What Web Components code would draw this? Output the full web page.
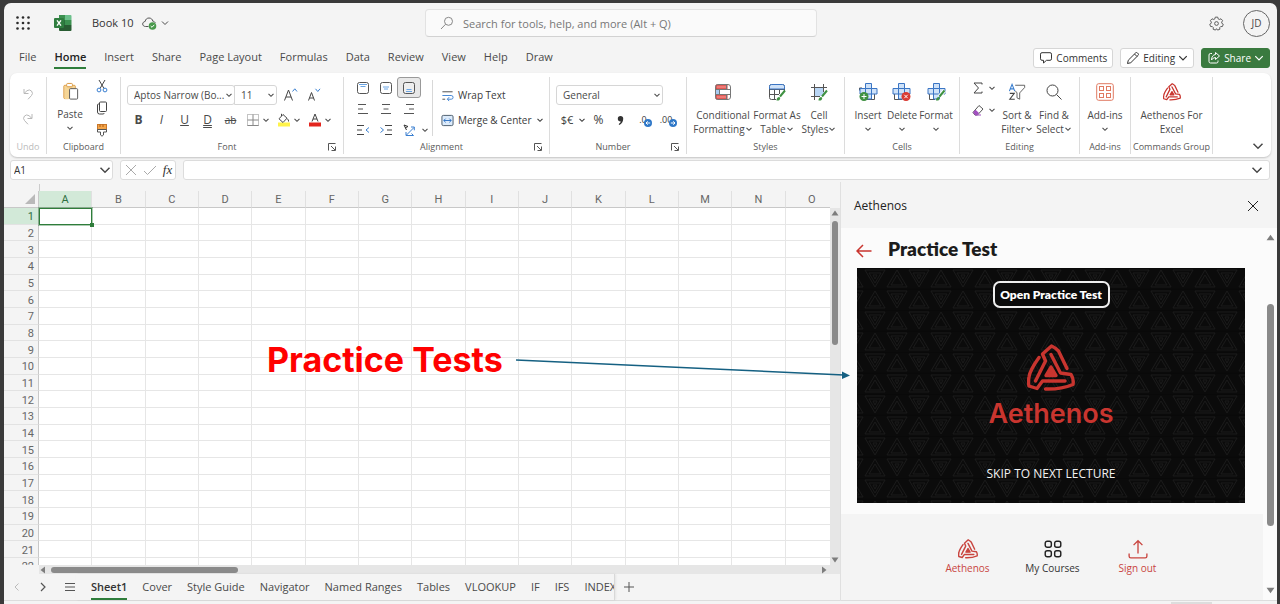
<!DOCTYPE html>
<html lang="en">
<head>
<meta charset="utf-8">
<title>Book 10</title>
<style>
html,body{margin:0;height:100%}
body{background:#3a3a3a;font-family:"Open Sans","Noto Sans",sans-serif;font-size:11px;line-height:14px;color:#4a4a4a;overflow:hidden}
</style>
</head>
<body>
<excel-app></excel-app>
<script>
const CONTROL = 'button,input,select{font:inherit;color:inherit;margin:0;padding:0;border:0;background:none;border-radius:0;outline:0;box-sizing:border-box}*{box-sizing:border-box}';

const LOGO = '<g fill="none" stroke="currentColor" stroke-width="3.4" stroke-linecap="round" stroke-linejoin="round"><path d="M40 24.500L31.500 7Q28 3.500 24.500 2L15.500 10 18.500 17 8.500 37"/><path d="M24 10.500L33.500 29 44 30.500Q47 35 46 40.500 34 45.500 18.500 45"/><path d="M12 13.500Q3 26 2 33 1 38 2 42L10 44.500 15.500 37H38"/><path d="M24 23l-5 8.500h10z" fill="currentColor"/></g>';
const ICONS = {
  logo:['0 0 48 48',LOGO],
  dots:['0 0 14 14','<g fill="#2b2b2b"><circle cx="1.5" cy="1.500" r="1.300"/><circle cx="7" cy="1.500" r="1.300"/><circle cx="12.500" cy="1.500" r="1.300"/><circle cx="1.500" cy="7" r="1.300"/><circle cx="7" cy="7" r="1.300"/><circle cx="12.500" cy="7" r="1.300"/><circle cx="1.500" cy="12.500" r="1.300"/><circle cx="7" cy="12.500" r="1.300"/><circle cx="12.500" cy="12.500" r="1.300"/></g>'],
  excel:['0 0 18 16','<path d="M5 0h6v5H5z" fill="#3c9150"/><path d="M11 0h5.500q1 0 1 1v4H11z" fill="#6cc08b"/><path d="M5 5h6v5H5z" fill="#2a6f3c"/><path d="M11 5h6.500v5H11z" fill="#3c9150"/><path d="M5 10h12.500v5q0 1-1 1H6q-1 0-1-1z" fill="#285c32"/><rect y="3" width="10" height="10" rx="1" fill="#2f7d3f"/><path d="M3 5.300l4 5.400M7 5.300l-4 5.400" stroke="#fff" stroke-width="1.400"/>'],
  cloud:['0 0 15 13','<path d="M6.500 9.500H3.600C1.700 9.500.7 8.300.7 7s1-2.400 2.400-2.500C3.600 2.200 5 1 7 1s3.500 1.300 3.800 3.200c1.300.1 2.100.8 2.500 1.800" fill="none" stroke="#555"/><circle cx="10.500" cy="9" r="3.800" fill="#4a9a4d"/><path d="M8.700 9l1.300 1.300 2.300-2.500" fill="none" stroke="#fff"/>'],
  chev:['0 0 8 8','<path d="M1 2.500l3 3 3-3" fill="none" stroke="currentColor" stroke-width="1"/>'],
  chevs:['0 0 8 8','<path d="M1.500 2.800l2.500 2.500 2.500-2.500" fill="none" stroke="currentColor" stroke-width="1.100"/>'],
  search:['0 0 14 14','<g fill="none" stroke="#888"><circle cx="8.500" cy="5.300" r="4"/><path d="M5.500 8.300L1 13"/></g>'],
  gear:['0 0 16 16','<g fill="none" stroke="#555"><path d="M6.700 1.200h2.600l.5 1.900 1.100.6 1.900-.7 1.700 1.900-1 1.700.2 1.200 1.500 1-.9 2.400-1.900.1-.9.9 0 2-2.400.8L8 13.500l-1.100 1.500-2.400-.8 0-2-.9-.9-1.900-.1-.9-2.400 1.500-1 .2-1.200-1-1.700L3.200 3l1.900.7 1.100-.6z" stroke-linejoin="round"/><circle cx="8" cy="8" r="2"/></g>'],
  comment:['0 0 14 14','<path d="M3 1.700h8q1.500 0 1.500 1.500v4.600q0 1.500-1.500 1.500H7.500L4.500 12V9.300H3Q1.500 9.300 1.500 7.800V3.200Q1.500 1.700 3 1.700z" fill="none" stroke="#333"/>'],
  pencil:['0 0 14 14','<g fill="none" stroke="#333" stroke-linejoin="round"><path d="M1.500 12.500l.8-3.300L9.500 2q1-1 2 0l.5.500q1 1 0 2L4.800 11.700z"/><path d="M8.500 3l2.500 2.500"/></g>'],
  share:['0 0 14 14','<g fill="none" stroke="#fff" stroke-linejoin="round"><path d="M5 2.500H3.500q-1.500 0-1.500 1.500v6.500Q2 12 3.500 12h6q1.500 0 1.500-1.500V9.500"/><path d="M8.500 1.500L12.500 5l-4 3.500V6.500Q6 6.500 4.500 9 4.700 4 8.500 3.500z"/></g>'],
  undo:['0 0 14 14','<g fill="none" stroke="#b8b8b8"><path d="M3 2v4.500h4.500"/><path d="M3 6.500L6 3.700Q8.500 2 10.500 4 12.500 6.500 10.500 8.500L7 12.300"/></g>'],
  redo:['0 0 14 14','<g fill="none" stroke="#b8b8b8"><path d="M11 2v4.500H6.500"/><path d="M11 6.500L8 3.700Q5.500 2 3.500 4 1.500 6.500 3.500 8.500L7 12.300"/></g>'],
  paste:['0 0 18 20','<path d="M7 17.500H3q-1 0-1-1v-12q0-1 1-1h10q1 0 1 1V7" fill="#f7d9a0" stroke="#d9963c"/><path d="M3 4h10v14H3z" fill="#f5d596"/><rect x="5" y="1.500" width="6" height="3.500" rx="1" fill="#fff" stroke="#d9963c"/><rect x="8" y="7" width="8.500" height="11" rx="1" fill="#fff" stroke="#555"/>'],
  cut:['0 0 14 14','<path d="M4 1l5 8.500M10 1L5 9.500" stroke="#444" fill="none"/><g fill="none" stroke="#3a7fd0"><circle cx="4" cy="11" r="1.900"/><circle cx="10" cy="11" r="1.900"/></g>'],
  copy:['0 0 14 14','<g fill="none" stroke="#444"><rect x="4.500" y="1" width="7" height="9.500" rx="1"/><path d="M4.500 3H3.500q-1 0-1 1v7q0 2 2 2H8q1 0 1.300-1"/></g>'],
  brush:['0 0 14 14','<rect x="2.500" y="1.500" width="9" height="5" fill="#f3a54a" stroke="#c9772a"/><path d="M5 1.500V4M8 1.500V4" stroke="#b35c10"/><path d="M2.500 6.500h9v2.500H8.500v3L7 13.200 5.500 12V9h-3z" fill="#fff" stroke="#555"/>'],
  grow:['0 0 16 16','<path d="M1.500 13.500L5.500 3l4 10.500M3 10h5" fill="none" stroke="#444"/><path d="M9.500 4.500l2.300-2.700L14 4.500" fill="none" stroke="#3a7fd0"/>'],
  shrink:['0 0 16 16','<path d="M2.500 13.500L5.500 5.500l3 8M3.500 11h4" fill="none" stroke="#444"/><path d="M9.500 1.800l2.300 2.700L14 1.800" fill="none" stroke="#3a7fd0"/>'],
  borders:['0 0 14 14','<g fill="none" stroke="#888"><rect x="1.500" y="1.500" width="11" height="11" stroke-dasharray="1 1"/><path d="M7 1.500v11M1.500 7h11M1.500 12.500h11"/></g>'],
  fill:['0 0 14 14','<rect x="1" y="9.500" width="12" height="4" fill="#fff34a"/><path d="M6 1.500L2 5.800l4 3.700 4-4.300zM4.500 3V.8M10 5.500q2 1.500 1.500 3" fill="#fff" stroke="#444"/>'],
  fcolor:['0 0 14 14','<rect x="1" y="9.500" width="12" height="4" fill="#e3261f"/><path d="M4 8.500L7 1l3 7.500M5 6h4" fill="none" stroke="#444"/>'],
  launch:['0 0 10 10','<path d="M1.500 8.500v-7h7M4 4l4 4M8.500 4.500v4h-4" fill="none" stroke="#555"/>'],
  vtop:['0 0 14 14','<rect x="1.500" y="1.500" width="11" height="11" rx="2" fill="#fff" stroke="#555"/><path d="M3 3.500h8M4.500 5.500h5" stroke="#6aa5e4"/>'],
  vmid:['0 0 14 14','<rect x="1.500" y="1.500" width="11" height="11" rx="2" fill="#fff" stroke="#555"/><path d="M4 6h6M5 8h4" stroke="#6aa5e4"/>'],
  vbot:['0 0 14 14','<rect x="1.500" y="1.500" width="11" height="11" rx="2" fill="#eee" stroke="#555"/><path d="M4.500 8.500h5M4 10.500h6" stroke="#6aa5e4"/>'],
  left:['0 0 14 14','<path d="M2 2.500h8M2 7h5M2 11.500h10" stroke="#555"/>'],
  center:['0 0 14 14','<path d="M3 2.500h8M4.500 7h5M2 11.500h10" stroke="#555"/>'],
  right:['0 0 14 14','<path d="M4 2.500h8M7 7h5M2 11.500h10" stroke="#555"/>'],
  outdent:['0 0 14 14','<path d="M1 2.500h7M1 7h5M1 11.500h7" stroke="#444"/><path d="M13 4.500L10 7l3 2.500" fill="none" stroke="#3a7fd0"/>'],
  indent:['0 0 14 14','<path d="M6 2.500h7M8 7h5M6 11.500h7" stroke="#444"/><path d="M1.500 4.500l3 2.500-3 2.500" fill="none" stroke="#3a7fd0"/>'],
  orient:['0 0 14 14','<path d="M2 2l4 1.500M2 2l2.500 5M3 5l3-1.500" fill="none" stroke="#333"/><path d="M4.500 12L12 4.500M9 4h3.300v3.300M4 9v3.500h7.500l-2-2" fill="none" stroke="#3a7fd0"/>'],
  wrap:['0 0 14 14','<path d="M1.500 3h11M1.500 11h3" stroke="#444"/><path d="M1.500 7H11q2 0 2 2t-2 2H7M8.800 8.800L6.800 11l2 2" fill="none" stroke="#3a7fd0"/>'],
  merge:['0 0 14 14','<rect x="1" y="1.500" width="12" height="11" rx="1.500" fill="#dcebfb" stroke="#456"/><path d="M3 7h8M5 5L3 7l2 2M9 5l2 2-2 2" fill="none" stroke="#2a6fc4"/>'],
  comma:['0 0 8 10','<path d="M4 0a3 3 0 0 1 3 3.200Q7 7.500 2.500 10L2 9Q4.300 7.500 4.300 6 1 6 1 3A3 3 0 0 1 4 0z" fill="#333"/>'],
  circR:['0 0 8 8','<circle cx="4" cy="4" r="4" fill="#2f78c8"/><path d="M1.800 4h4M4.300 2.300L6 4 4.300 5.700" fill="none" stroke="#fff"/>'],
  circL:['0 0 8 8','<circle cx="4" cy="4" r="4" fill="#2f78c8"/><path d="M6.200 4h-4M3.700 2.300L2 4l1.700 1.700" fill="none" stroke="#fff"/>'],
  cond:['0 0 18 18','<rect x="1.500" y="1.500" width="15" height="15" rx="2" fill="#fff"/><path d="M2 2h11v4H2zM2 12h11v4H2z" fill="#ef7a76" stroke="#cf3b38"/><path d="M2 6.500h3v5H2z" fill="#a9cbf2"/><rect x="1.500" y="1.500" width="15" height="15" rx="2.500" fill="none" stroke="#777"/><path d="M1.500 6.500h15M1.500 11.500h15M5.500 6.500v5M12.500 1.500v5M12.500 11.500v5" stroke="#777" fill="none"/>'],
  table:['0 0 18 18','<path d="M16.500 9V3.500q0-2-2-2h-11q-2 0-2 2v11q0 2 2 2H8M1.500 6.500h15M1.500 11.500H11M6.500 6.500v10M11.500 6.500V11" fill="#fff" stroke="#555"/><path d="M1.500 6V3.500q0-2 2-2h11q2 0 2 2V6z" fill="#cfe2f8" stroke="#3a75c4"/><path d="M17 7.500L12 13.500" stroke="#3f9142" stroke-width="2"/><path d="M8.500 17.500q0-3.500 3-3.500 1.500 1.500 0 3-1 .8-3 .5z" fill="#3f9142"/>'],
  cell:['0 0 18 18','<path d="M5 5h9v8H5z" fill="#b9d6f5"/><path d="M4.500 1v16M13.500 1v8M1 4.500h16M1 13.500h9" stroke="#555" fill="none"/><path d="M17 7.500L12 13.500" stroke="#3f9142" stroke-width="2"/><path d="M8.500 17.500q0-3.500 3-3.500 1.500 1.500 0 3-1 .8-3 .5z" fill="#3f9142"/>'],
  insert:['0 0 20 20','<path d="M16.500 12v5.500H9M1.500 8.500V6H4" stroke="#555" fill="none"/><path d="M7.500 1.500h6v5H19v5.500h-5.500v5h-6v-5H2V6.500h5.500z" fill="#cfe2f8" stroke="#3a75c4"/><path d="M7.500 6.500h6V12h-6z" fill="none" stroke="#3a75c4"/><circle cx="6" cy="14.500" r="4.500" fill="#3f9142"/><path d="M3.500 14.500h5M6 12v5" stroke="#fff"/>'],
  delete:['0 0 20 20','<path d="M2.500 12v5.500H10" stroke="#555" fill="none"/><path d="M6.500 1.500h6v5H18v5.500h-5.500v5h-6v-5H1V6.500h5.500z" fill="#cfe2f8" stroke="#3a75c4"/><path d="M6.500 6.500h6V12h-6z" fill="none" stroke="#3a75c4"/><circle cx="14" cy="14.500" r="4.500" fill="#d93a33"/><path d="M12.300 12.800l3.400 3.400M15.700 12.800l-3.400 3.400" stroke="#fff"/>'],
  format:['0 0 20 20','<path d="M3.500 12v5.500H9" stroke="#555" fill="none"/><path d="M7.500 1.500h6v5H19v5.500h-5.500v5h-6v-5H2V6.500h5.500z" fill="#cfe2f8" stroke="#3a75c4"/><path d="M7.500 6.500h6V12h-6z" fill="none" stroke="#3a75c4"/><path d="M18.500 8.500L13.500 14.500" stroke="#fff" stroke-width="4"/><path d="M18.500 8.500L13.500 14.500" stroke="#3f9142" stroke-width="2"/><path d="M10 18.500q0-3.500 3-3.500 1.500 1.500 0 3-1 .8-3 .5z" fill="#3f9142"/>'],
  sum:['0 0 12 12','<path d="M10 2.500V1H2l4.500 5L2 11h8V9.500" fill="none" stroke="#444"/>'],
  eraser:['0 0 12 12','<path d="M7 1.500l4 3.500-5.500 6H3L1 8.500z" fill="#fff" stroke="#555"/><path d="M1 8.300l2.500-2.500L7 9l-2 2H3z" fill="#a24fc0"/><path d="M3 11h6" stroke="#a24fc0"/>'],
  sort:['0 0 20 20','<path d="M8 2.500h10.500v2.500L13 11v7l-3-1.500V11L8 8.500" fill="#fff" stroke="#555"/><path d="M1.500 9L4.500 1.500 7.500 9M2.700 6.500h3.600" fill="none" stroke="#3a7fd0" stroke-width="1.200"/><path d="M2 11.500h5L2 18h5.500" fill="none" stroke="#444" stroke-width="1.200"/>'],
  find:['0 0 18 18','<circle cx="7.500" cy="7.500" r="5.500" fill="none" stroke="#444"/><path d="M11.500 11.500l5 5" stroke="#444"/>'],
  addins:['0 0 18 18','<g fill="none" stroke="#e07a62"><rect x=".7" y=".7" width="16.600" height="16.600" rx="2"/><rect x="3.500" y="3.500" width="4" height="4"/><rect x="10.500" y="3.500" width="4" height="4"/><rect x="3.500" y="10.500" width="4" height="4"/><rect x="10.500" y="10.500" width="4" height="4"/></g>'],
  x:['0 0 14 14','<path d="M2 2l10 10M12 2L2 12" stroke="currentColor" fill="none"/>'],
  check:['0 0 14 14','<path d="M1 8l3.500 3.500L13 3" stroke="currentColor" fill="none"/>'],
  prev:['0 0 10 10','<path d="M6.500 1.500L3 5l3.500 3.500" stroke="#bbb" fill="none"/>'],
  next:['0 0 10 10','<path d="M3 1l4 4-4 4" stroke="#555" fill="none" stroke-width="1.200"/>'],
  menu:['0 0 12 12','<path d="M1 2.500h10M1 6h10M1 9.500h10" stroke="#555"/>'],
  plus:['0 0 12 12','<path d="M6 1v10M1 6h10" stroke="#555"/>'],
  up:['0 0 8 8','<path d="M4 1.500L7.500 6.500H.5z" fill="#7d7d7d"/>'],
  down:['0 0 8 8','<path d="M4 6.500L7.500 1.500H.5z" fill="#7d7d7d"/>'],
  lft:['0 0 8 8','<path d="M1.500 4L6 .5v7z" fill="#7d7d7d"/>'],
  rgt:['0 0 8 8','<path d="M6.500 4L2 .5v7z" fill="#7d7d7d"/>'],
  corner:['0 0 10 10','<path d="M10 0v10H0z" fill="#b9b9b9"/>'],
  back:['0 0 16 14','<path d="M1 7h14.500M7 1L1 7l6 6" stroke="#c9352f" stroke-width="1.500" fill="none"/>'],
  apps:['0 0 18 18','<g fill="none" stroke="#222" stroke-width="1.300"><rect x="2" y="2" width="5.500" height="5.500" rx="1.800"/><rect x="10.500" y="2" width="5.500" height="5.500" rx="1.800"/><rect x="2" y="10.500" width="5.500" height="5.500" rx="1.800"/><rect x="10.500" y="10.500" width="5.500" height="5.500" rx="1.800"/></g>'],
  signout:['0 0 18 18','<path d="M9 13V1.500M5 5.500l4-4 4 4M1 13v2.500q0 1.500 1.500 1.500h13q1.500 0 1.500-1.500V13" fill="none" stroke="#c9453f" stroke-width="1.200"/>']
};

const define = (name, html, init) => {
  const t = document.createElement('template');
  t.innerHTML = `<style>${CONTROL}</style>` + html;
  customElements.define(name, class extends HTMLElement {
    connectedCallback(){
      if (this.shadowRoot) return;
      const root = this.attachShadow({mode:'open'});
      root.append(t.content.cloneNode(true));
      if (init) init(root, this);
    }
  });
};

/* <ui-icon name size [h]> */
define('ui-icon', '<style>:host{display:block;flex:none}svg{display:block}</style>', (root, host) => {
  const [box, body] = ICONS[host.getAttribute('name')];
  const w = host.getAttribute('size') || 14, h = host.getAttribute('h') || w;
  const s = document.createElement('div');
  s.innerHTML = `<svg width="${w}" height="${h}" viewBox="${box}" aria-hidden="true">${body}</svg>`;
  root.append(s);
});

/* icon-only button */
define('icon-button', `<style>:host{display:flex;justify-content:center;align-items:center;flex:none}button{display:flex;align-items:center;justify-content:center;width:100%;height:100%}
:host([pressed]) button{background:#e8e8e8;border:1px solid #999;border-radius:3px}</style><button type="button"></button>`, (root, host) => {
  const b = root.querySelector('button');
  b.setAttribute('aria-label', host.getAttribute('label') || host.getAttribute('icon'));
  b.innerHTML = `<ui-icon name="${host.getAttribute('icon')}" size="${host.getAttribute('size')||14}"></ui-icon>`;
});

/* tall ribbon button: icon over one or two lines */
define('big-button', `<style>:host{display:block;flex:none;min-width:0}
button{display:flex;flex-direction:column;align-items:center;width:100%;font-size:10px;line-height:13px;white-space:nowrap}
.i{height:20px;display:flex;align-items:center;margin-bottom:7px;color:#c9352f}
.r{display:flex;align-items:center;height:14px}</style>
<button type="button"><span class="i"></span><span class="a"></span><span class="r"></span></button>`, (root, host) => {
  root.querySelector('.i').innerHTML = `<ui-icon name="${host.getAttribute('icon')}" size="${host.getAttribute('size')||18}"></ui-icon>`;
  root.querySelector('.a').textContent = host.getAttribute('top');
  root.querySelector('.r').innerHTML = `<span>${host.getAttribute('bottom')||''}</span>` + (host.hasAttribute('nochev') ? '' : '<ui-icon name="chevs" size="8"></ui-icon>');
});

define('ribbon-group', `<style>:host{display:flex;flex-direction:column;flex:none;border-right:1px solid #dcdcdc;height:77px}
.body{flex:1;min-height:0;display:flex}
footer{height:14px;line-height:14px;font-size:9px;text-align:center;color:#5a5a5a;display:grid;grid-template-columns:1fr auto 1fr;align-items:center;white-space:nowrap}
:host([launcher]) footer{padding-right:10px}
ui-icon{justify-self:end;margin-right:-4px}
:host([muted]) footer{color:#bbb}</style><div class="body"><slot></slot></div><footer><i></i><span></span></footer>`, (root, host) => {
  root.querySelector('span').textContent = host.getAttribute('label');
  if (host.hasAttribute('launcher')) root.querySelector('footer').insertAdjacentHTML('beforeend','<ui-icon name="launch" size="10"></ui-icon>');
});

define('drop-list', `<style>:host{display:grid;height:20px;border:1px solid #d6d6d6;border-radius:3px;background:#fff;font-size:10px}
select,ui-icon{grid-area:1/1}select{appearance:none;width:100%;min-width:0;padding:0 8px 0 6px}ui-icon{justify-self:end;align-self:center;margin-right:1px;pointer-events:none}</style>
<select><option></option></select><ui-icon name="chevs" size="8"></ui-icon>`, (root, host) => {
  root.querySelector('option').textContent = host.getAttribute('value');
  root.querySelector('select').setAttribute('aria-label', host.getAttribute('label'));
});

define('title-bar', `<style>:host{display:grid;grid-template-columns:421px minmax(0,392px) 1fr;height:40px;align-items:center}
.l{display:flex;align-items:center;padding-left:12px}.l h1{font:inherit;margin:0 8px 0 20px;color:#333}
.l ui-icon+ui-icon{margin-left:24px}.l h1~ui-icon{margin-left:0}.l h1~ui-icon+ui-icon{margin-left:4px}
label{display:flex;align-items:center;height:28px;border:1px solid #e2e2e2;border-bottom-color:#d2d2d2;border-radius:4px;background:#fafafa;padding-left:14px;gap:9px}
input{flex:1;min-width:0;height:24px}input::placeholder{color:#777;opacity:1}
.r{display:flex;justify-content:flex-end;align-items:center;gap:19px;padding-right:7px}
.av{width:27px;height:27px;border:1px solid #666;border-radius:50%;font-size:10px}</style>
<div class="l"><ui-icon name="dots" size="14"></ui-icon><ui-icon name="excel" size="18" h="16"></ui-icon><h1>Book 10</h1><ui-icon name="cloud" size="15" h="13"></ui-icon><ui-icon name="chev" size="8"></ui-icon></div>
<label><ui-icon name="search" size="14"></ui-icon><input type="search" aria-label="Search" placeholder="Search for tools, help, and more (Alt + Q)"></label>
<div class="r"><ui-icon name="gear" size="15"></ui-icon><button class="av" type="button">JD</button></div>`);

define('menu-tabs', `<style>:host{display:flex;height:29px;align-items:center;padding:0 7px 0 15px}
nav{display:flex;gap:18px;flex:1;white-space:nowrap}a{color:#4a4a4a;text-decoration:none;height:23px;line-height:22px;border-bottom:2px solid transparent}
a.on{font-weight:600;color:#222;border-color:#2f7d3b}
.b{display:flex;gap:7px}button{display:flex;align-items:center;gap:3px;height:20px;border:1px solid #d6d6d6;border-radius:3px;background:#fff;padding:0 5px;font-size:10px;color:#333}
.s{background:#3a7a3f;border-color:#3a7a3f;color:#fff}</style>
<nav><a href="#file">File</a><a href="#home" class="on">Home</a><a href="#insert">Insert</a><a href="#share">Share</a><a href="#layout">Page Layout</a><a href="#formulas">Formulas</a><a href="#data">Data</a><a href="#review">Review</a><a href="#view">View</a><a href="#help">Help</a><a href="#draw">Draw</a></nav>
<div class="b"><button type="button"><ui-icon name="comment" size="14"></ui-icon>Comments</button><button type="button"><ui-icon name="pencil" size="14"></ui-icon>Editing<ui-icon name="chev" size="10"></ui-icon></button><button type="button" class="s"><ui-icon name="share" size="14"></ui-icon>Share<ui-icon name="chev" size="10"></ui-icon></button></div>`);

define('ribbon-bar', `<style>:host{display:flex;height:84px;margin:1px 6px 0;padding:4px 0 3px;background:#fff;border-radius:7px;box-shadow:0 1px 2px #0003;font-size:10px;overflow:hidden}
.col{display:flex;flex-direction:column}.row{display:flex;align-items:center}
.undo{width:37px}.clip{width:74px}.font{width:223px}.ali{width:206px}.num{width:137px}.sty{width:158px}.cel{width:115px}.edi{width:120px}.add{width:51px}.cmd{width:82px}
.undo .col{padding:10px 0 0 11px;gap:11px}
.clip big-button{width:46px;padding-top:4px}.clip .col{padding:2px 0 0 2px;gap:8px}
.font .col{padding:8px 0 0 6px}.top drop-list+drop-list{margin-left:-1px;border-radius:0 3px 3px 0}.fn{width:108px}.fs{width:43px}
.top icon-button{width:23px}.top icon-button:first-of-type{margin-left:2px}
.fmt{margin-top:7px;height:16px}.fmt button{width:23px;font-size:12px}.fmt .d{text-decoration:underline double}.fmt s{font-size:10px}
.fmt icon-button{width:18px}.chev{margin-right:5px}
.fmt button+icon-button{margin-left:2px}
.ag{display:grid;grid-template-columns:repeat(3,23px) 9px;grid-template-rows:21px 21px 21px;padding:0 0 0 7px;align-items:center;justify-items:center}
.ag icon-button[pressed]{width:24px;height:21px}
.sep{width:1px;background:#d8d8d8;height:56px;margin:3px 8px 0 3px}
.text{padding-top:11px;gap:11px;color:#3a3a3a}.text button{display:flex;align-items:center;gap:4px;height:14px;white-space:nowrap}
.num .col{padding:8px 0 0 6px}.num drop-list{width:107px}.nf{margin-top:7px;height:16px;color:#3a3a3a}.nf button{font-size:12px}
.cur{width:22px}.nf .cur{font-size:11px}.pct{margin-left:4px;width:17px}.com{width:27px}.dec{display:flex;width:23px;align-items:flex-end;justify-content:center}
.nf .dec{font-size:9px}.dec ui-icon{margin-left:-3px}
big-button{padding-top:5px}
.w72{width:72px}.w36{width:36px}.w48{width:48px}.w46{width:46px}.w22{width:22px}.w42{width:42px}.w32{width:32px}.w50{width:50px}.w81{width:81px}
.edi .col{padding:5px 0 0 12px;gap:10px;width:36px}.edi .row{justify-content:space-between}
.end{flex:1;display:flex;align-items:flex-end;justify-content:flex-end;padding:0 7px 2px}</style>
<ribbon-group class="undo" label="Undo" muted><div class="col"><icon-button icon="undo"></icon-button><icon-button icon="redo"></icon-button></div></ribbon-group>
<ribbon-group class="clip" label="Clipboard"><big-button icon="paste" size="19" top="Paste"></big-button><div class="col"><icon-button icon="cut" label="Cut"></icon-button><icon-button icon="copy" label="Copy"></icon-button><icon-button icon="brush" label="Format Painter"></icon-button></div></ribbon-group>
<ribbon-group class="font" label="Font" launcher><div class="col"><div class="row top"><drop-list class="fn" value="Aptos Narrow (Bo..." label="Font"></drop-list><drop-list class="fs" value="11" label="Font size"></drop-list><icon-button icon="grow" size="16"></icon-button><icon-button icon="shrink" size="16"></icon-button></div>
<div class="row fmt"><button type="button"><b>B</b></button><button type="button"><i>I</i></button><button type="button"><u>U</u></button><button type="button"><u class="d">D</u></button><button type="button"><s>ab</s></button><icon-button icon="borders"></icon-button><ui-icon class="chev" name="chevs" size="8"></ui-icon><icon-button icon="fill"></icon-button><ui-icon class="chev" name="chevs" size="8"></ui-icon><icon-button icon="fcolor"></icon-button><ui-icon name="chevs" size="8"></ui-icon></div></div></ribbon-group>
<ribbon-group class="ali" label="Alignment" launcher><div class="ag"><icon-button icon="vtop"></icon-button><icon-button icon="vmid"></icon-button><icon-button icon="vbot" pressed></icon-button><i></i><icon-button icon="left"></icon-button><icon-button icon="center"></icon-button><icon-button icon="right"></icon-button><i></i><icon-button icon="outdent"></icon-button><icon-button icon="indent"></icon-button><icon-button icon="orient"></icon-button><ui-icon name="chevs" size="8"></ui-icon></div><div class="sep"></div>
<div class="col text"><button type="button"><ui-icon name="wrap" size="13"></ui-icon>Wrap Text</button><button type="button"><ui-icon name="merge" size="13"></ui-icon>Merge &amp; Center<ui-icon name="chevs" size="8"></ui-icon></button></div></ribbon-group>
<ribbon-group class="num" label="Number" launcher><div class="col"><drop-list value="General" label="Number format"></drop-list><div class="row nf"><button type="button" class="cur">$€</button><ui-icon name="chevs" size="8"></ui-icon><button type="button" class="pct">%</button><icon-button class="com" icon="comma" size="9"></icon-button><button type="button" class="dec">.0<ui-icon name="circL" size="8"></ui-icon></button><button type="button" class="dec">.00<ui-icon name="circR" size="8"></ui-icon></button></div></div></ribbon-group>
<ribbon-group class="sty" label="Styles"><big-button class="w72" icon="cond" top="Conditional" bottom="Formatting"></big-button><big-button class="w36" icon="table" top="Format As" bottom="Table"></big-button><big-button class="w48" icon="cell" top="Cell" bottom="Styles"></big-button></ribbon-group>
<ribbon-group class="cel" label="Cells"><big-button class="w46" icon="insert" size="20" top="Insert"></big-button><big-button class="w22" icon="delete" size="20" top="Delete"></big-button><big-button class="w46" icon="format" size="20" top="Format"></big-button></ribbon-group>
<ribbon-group class="edi" label="Editing"><div class="col"><div class="row"><ui-icon name="sum" size="12"></ui-icon><ui-icon name="chevs" size="8"></ui-icon></div><div class="row"><ui-icon name="eraser" size="12"></ui-icon><ui-icon name="chevs" size="8"></ui-icon></div></div><big-button class="w42" icon="sort" top="Sort &amp;" bottom="Filter"></big-button><big-button class="w32" icon="find" top="Find &amp;" bottom="Select"></big-button></ribbon-group>
<ribbon-group class="add" label="Add-ins"><big-button class="w50" icon="addins" top="Add-ins"></big-button></ribbon-group>
<ribbon-group class="cmd" label="Commands Group"><big-button class="w81" icon="logo" top="Aethenos For" bottom="Excel" nochev></big-button></ribbon-group>
<div class="end"><ui-icon name="chev" size="12"></ui-icon></div>`);

define('formula-bar', `<style>:host{display:flex;gap:7px;margin:3px 7px 0 6px;height:20px}
div{border:1px solid #dcdcdc;border-radius:3px;background:#fff;display:flex;align-items:center}
.n{width:103px;padding:0 1px 0 3px}.n input{flex:1;min-width:0;font-size:10px;color:#333}
.f{width:56px;justify-content:space-around;color:#aaa}.f button{color:#333;font:italic 13px "Liberation Serif",serif}
.v{flex:1;padding:0 6px}.v input{flex:1}</style>
<div class="n"><input aria-label="Name box" value="A1"><ui-icon name="chev" size="12"></ui-icon></div>
<div class="f"><ui-icon name="x" size="14"></ui-icon><ui-icon name="check" size="14"></ui-icon><button type="button">fx</button></div>
<div class="v"><input aria-label="Formula"><ui-icon name="chev" size="12"></ui-icon></div>`);

define('sheet-grid', `<style>:host{display:grid;grid-template-columns:1fr 10px;grid-template-rows:9px 1fr 9px;flex:1;min-height:0;overflow:hidden;font-family:Roboto,sans-serif;font-size:11px;line-height:13px;color:#666}
.pad{grid-area:1/1/2/3;display:flex}.pad:before{content:"";width:35px;margin-top:2px;border-right:1px solid #ccc}
.view{grid-area:2/1;overflow:hidden;min-width:0;min-height:0}
table{display:grid;width:835px;height:417px;grid-template-columns:35px repeat(15,1fr);grid-template-rows:17px repeat(24,minmax(0,1fr))}
tbody,thead,tr{display:contents}
th{font-weight:400;padding:1px 0 0;display:flex;align-items:center;justify-content:center;background:#f4f4f4;border-right:1px solid #e0e0e0;border-bottom:1px solid #c8c8c8}
tbody th{justify-content:flex-end;padding:2px 4px 0 0;border-right-color:#c8c8c8;border-bottom-color:#e2e2e2}
thead td{display:flex;justify-content:flex-end;align-items:center;background:#f4f4f4;border-bottom:1px solid #c8c8c8;border-right:1px solid #c8c8c8;padding:0 3px 0 0}
tbody td{background:#fff;border-right:1px solid #e6e6e6;border-bottom:1px solid #e6e6e6;padding:0}
th.on{background:#d2e9d8;color:#2f6f3f}
td.sel{outline:1px solid #2f7d3b;outline-offset:-1px;box-shadow:0 0 0 1px #2f7d3b66;position:relative}
td.sel:after{content:"";position:absolute;right:-3px;bottom:-3px;width:4px;height:4px;background:#2f7d3b}
.v{grid-area:2/2;margin-top:17px;background:#e6e6e6;display:flex;flex-direction:column;align-items:center;padding:1px 1px 1px 0;gap:4px}
.v i{width:6px;height:124px;border-radius:3px;background:#8a8a8a}.v ui-icon:last-child{margin-top:auto}
.h{grid-area:3/1/4/3;margin-left:35px;background:#e6e6e6;display:flex;align-items:center;padding:0 12px 0 0;gap:4px}
.h i{height:6px;width:187px;border-radius:3px;background:#8a8a8a}.h ui-icon:last-child{margin-left:auto}</style>
<div class="pad"></div><div class="view"><table><thead><tr><td><ui-icon name="corner" size="10"></ui-icon></td></tr></thead><tbody></tbody></table></div>
<div class="v"><ui-icon name="up" size="8"></ui-icon><i></i><ui-icon name="down" size="8"></ui-icon></div>
<div class="h"><ui-icon name="lft" size="8"></ui-icon><i></i><ui-icon name="rgt" size="8"></ui-icon></div>`, root => {
  const cols = [...'ABCDEFGHIJKLMNO'];
  root.querySelector('thead tr').insertAdjacentHTML('beforeend', cols.map((c,i)=>`<th scope="col"${i?'':' class="on"'}>${c}</th>`).join(''));
  root.querySelector('tbody').innerHTML = Array.from({length:22},(_,r)=>`<tr><th scope="row"${r?'':' class="on"'}>${r+1}</th>${cols.map((c,i)=>`<td${r||i?'':' class="sel"'}></td>`).join('')}</tr>`).join('');
});

define('sheet-tabs', `<style>:host{display:flex;align-items:center;height:27px;padding-left:8px;border-bottom:1px solid #ddd;color:#4a4a4a}
.c{display:flex;gap:16px;align-items:center}
nav{display:flex;gap:15px;padding-left:15px;width:539px;overflow:hidden;border-right:1px solid #d8d8d8;box-shadow:1px 0 2px #0001;height:26px;white-space:nowrap}
a{color:inherit;text-decoration:none;line-height:25px;height:26px;border-bottom:2px solid transparent;flex:none}
a.on{font-weight:600;color:#333;border-color:#2f7d3b}.p{margin-left:8px}</style>
<div class="c"><ui-icon name="prev" size="10"></ui-icon><ui-icon name="next" size="10"></ui-icon><ui-icon name="menu" size="12"></ui-icon></div>
<nav><a href="#1" class="on">Sheet1</a><a href="#2">Cover</a><a href="#3">Style Guide</a><a href="#4">Navigator</a><a href="#5">Named Ranges</a><a href="#6">Tables</a><a href="#7">VLOOKUP</a><a href="#8">IF</a><a href="#9">IFS</a><a href="#10">INDEX</a></nav><ui-icon class="p" name="plus" size="12"></ui-icon>`);

define('lecture-card', `<style>:host{display:grid;height:235px;background:#0b0b0b}
svg.bg,.in{grid-area:1/1}svg.bg{width:100%;height:100%;display:block}
.in{display:flex;flex-direction:column;align-items:center;padding-top:13px;position:relative}
.open{height:27px;width:117px;border:2px solid #eee;border-radius:7px;background:#0b0b0b;color:#fff;font:800 12px Lato,sans-serif}
.lg{color:#c9352f;margin-top:36px}
strong{color:#c9352f;font:600 27px/32px Inter,sans-serif;margin-top:6px}
a{color:#f2f2f2;text-decoration:none;font-size:12px;margin-top:37px}</style>
<svg class="bg" aria-hidden="true"><defs><pattern id="p" width="44" height="42" patternUnits="userSpaceOnUse"><g fill="none" stroke="#1a1a1a"><g><path d="M8 2h20L18 19zM12 5h12l-6 10zM16 7h4l-2 4z"/><path d="M30 19L40 2l10 17zM34 17l6-10 6 10zM-14 19L-4 2 6 19zM-10 17l6-10 6 10z"/></g><path d="M-14 23h20L-4 40zM-10 26h12l-6 10zM30 23h20L40 40zM34 26h12l-6 10zM38 28h4l-2 4z"/><path d="M8 40l10-17 10 17zM12 38l6-10 6 10z"/></g><path d="M0 0h44M0 21h44" stroke="#070707"/></pattern></defs><rect width="100%" height="100%" fill="url(#p)"/></svg>
<div class="in"><button class="open" type="button">Open Practice Test</button><ui-icon class="lg" name="logo" size="48"></ui-icon><strong>Aethenos</strong><a href="#next">SKIP TO NEXT LECTURE</a></div>`);

define('task-pane', `<style>:host{display:flex;flex-direction:column;width:437px;flex:none;border-left:1px solid #e0e0e0}
header{height:46px;display:flex;align-items:center;justify-content:space-between;padding:2px 17px 0 13px;font-size:12px;color:#222}
.m{flex:1;display:flex;min-height:0;background:#fbfbfb;border-bottom:1px solid #ddd}
.c{flex:1;display:flex;flex-direction:column}
.t{display:flex;align-items:center;gap:16px;padding:5px 0 0 15px;height:40px}h2{margin:0;padding-bottom:3px;font:800 19px/30px Lato,sans-serif;color:#1c1c1c}
lecture-card{margin:0 18px 11px 16px}
footer{flex:1;background:#f4f4f4;display:flex;justify-content:center;padding:25px 0 0 1px;font-size:10px}
footer a{width:85px;display:flex;flex-direction:column;align-items:center;gap:2px;color:#c9453f;text-decoration:none}footer a.k{color:#333}
.s{width:14px;display:flex;flex-direction:column;align-items:center;padding:5px 0 5px}.s i{width:7px;height:222px;border-radius:4px;background:#8a8a8a;margin-top:62px}.s ui-icon:last-child{margin-top:auto}</style>
<header>Aethenos<ui-icon name="x" size="14"></ui-icon></header>
<div class="m"><div class="c"><div class="t"><ui-icon name="back" size="16" h="14"></ui-icon><h2>Practice Test</h2></div><lecture-card></lecture-card>
<footer><a href="#home"><ui-icon name="logo" size="20"></ui-icon>Aethenos</a><a href="#courses" class="k"><ui-icon name="apps" size="20"></ui-icon>My Courses</a><a href="#out"><ui-icon name="signout" size="20"></ui-icon>Sign out</a></footer></div>
<div class="s"><ui-icon name="up" size="9"></ui-icon><i></i><ui-icon name="down" size="9"></ui-icon></div></div>`);

/* callout drawn over the sheet, pointing at the pane */
define('call-out', `<style>:host{position:absolute;left:263px;top:337px;display:flex;align-items:flex-start;pointer-events:none}
strong{font:700 34px/40px Inter,sans-serif;color:#f00;width:249px;white-space:nowrap}svg{margin-top:17px;display:block}</style>
<strong>Practice Tests</strong><svg width="336" height="28"><path d="M0 3L328 18" stroke="#156082" stroke-width="1.500"/><path d="M326 14.500l8 4-8 3.500z" fill="#156082"/></svg>`);

define('excel-app', `<style>:host{display:flex;flex-direction:column;height:calc(100vh - 3px);margin:0 3px 0 4px;top:3px;position:relative;background:#f4f4f4;border-radius:7px 7px 0 0;overflow:hidden}
main{flex:1;display:flex;min-height:0;margin-top:2px}.w{flex:1;min-width:0;display:flex;flex-direction:column}
.st{height:3px;display:flex;justify-content:flex-end;padding:1px 65px 0 0}.st i{width:41px;background:#ddd}</style>
<title-bar></title-bar><menu-tabs></menu-tabs><ribbon-bar></ribbon-bar><formula-bar></formula-bar>
<main><div class="w"><sheet-grid></sheet-grid><sheet-tabs></sheet-tabs></div><task-pane></task-pane></main><div class="st"><i></i></div><call-out></call-out>`);
</script>
</body>
</html>
